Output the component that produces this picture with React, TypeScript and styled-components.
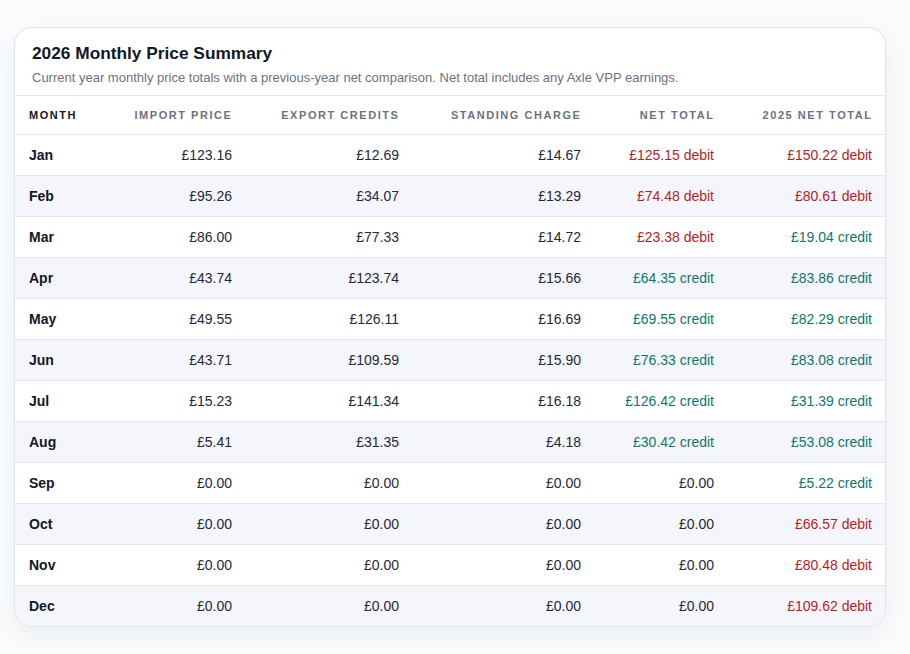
import styled, { createGlobalStyle } from "styled-components"

type Net = { amount: string; kind: "debit" | "credit" | "none" }

type Row = {
    month: string
    importPrice: string
    exportCredits: string
    standing: string
    net: Net
    prev: Net
}

const d = (amount: string): Net => ({ amount, kind: "debit" })
const c = (amount: string): Net => ({ amount, kind: "credit" })
const z: Net = { amount: "£0.00", kind: "none" }

const rows: Row[] = [
    { month: "Jan", importPrice: "£123.16", exportCredits: "£12.69", standing: "£14.67", net: d("£125.15"), prev: d("£150.22") },
    { month: "Feb", importPrice: "£95.26", exportCredits: "£34.07", standing: "£13.29", net: d("£74.48"), prev: d("£80.61") },
    { month: "Mar", importPrice: "£86.00", exportCredits: "£77.33", standing: "£14.72", net: d("£23.38"), prev: c("£19.04") },
    { month: "Apr", importPrice: "£43.74", exportCredits: "£123.74", standing: "£15.66", net: c("£64.35"), prev: c("£83.86") },
    { month: "May", importPrice: "£49.55", exportCredits: "£126.11", standing: "£16.69", net: c("£69.55"), prev: c("£82.29") },
    { month: "Jun", importPrice: "£43.71", exportCredits: "£109.59", standing: "£15.90", net: c("£76.33"), prev: c("£83.08") },
    { month: "Jul", importPrice: "£15.23", exportCredits: "£141.34", standing: "£16.18", net: c("£126.42"), prev: c("£31.39") },
    { month: "Aug", importPrice: "£5.41", exportCredits: "£31.35", standing: "£4.18", net: c("£30.42"), prev: c("£53.08") },
    { month: "Sep", importPrice: "£0.00", exportCredits: "£0.00", standing: "£0.00", net: z, prev: c("£5.22") },
    { month: "Oct", importPrice: "£0.00", exportCredits: "£0.00", standing: "£0.00", net: z, prev: d("£66.57") },
    { month: "Nov", importPrice: "£0.00", exportCredits: "£0.00", standing: "£0.00", net: z, prev: d("£80.48") },
    { month: "Dec", importPrice: "£0.00", exportCredits: "£0.00", standing: "£0.00", net: z, prev: d("£109.62") },
]

const label = (n: Net) => (n.kind === "none" ? n.amount : `${n.amount} ${n.kind}`)

// fixed column widths so the right edges line up with the design
const widths = [90, 142, 167, 182, 133, 158]

export default function App() {
    return (
        <>
            <GlobalStyle />
            <Page>
                <Card>
                    <Header>
                        <Title>2026 Monthly Price Summary</Title>
                        <Subtitle>
                            Current year monthly price totals with a previous-year net comparison. Net total
                            includes any Axle VPP earnings.
                        </Subtitle>
                    </Header>
                    <Table>
                        <colgroup>
                            {widths.map((w, i) => (
                                <col key={i} style={{ width: w }} />
                            ))}
                        </colgroup>
                        <thead>
                            <tr>
                                <Th $first>Month</Th>
                                <Th>Import price</Th>
                                <Th>Export credits</Th>
                                <Th>Standing charge</Th>
                                <Th>Net total</Th>
                                <Th>2025 net total</Th>
                            </tr>
                        </thead>
                        <tbody>
                            {rows.map((r) => (
                                <BodyRow key={r.month}>
                                    <MonthCell>{r.month}</MonthCell>
                                    <Td>{r.importPrice}</Td>
                                    <Td>{r.exportCredits}</Td>
                                    <Td>{r.standing}</Td>
                                    <Td $kind={r.net.kind}>{label(r.net)}</Td>
                                    <Td $kind={r.prev.kind}>{label(r.prev)}</Td>
                                </BodyRow>
                            ))}
                        </tbody>
                    </Table>
                </Card>
            </Page>
        </>
    )
}

const GlobalStyle = createGlobalStyle`
    body {
        margin: 0;
        background: #fafbfc;
        font-family: "Liberation Sans", Arial, sans-serif;
        color: #1f2937;
    }
`

const Page = styled.div`
    padding: 27px 24px 28px 14px;
`

const Card = styled.div`
    width: 872px;
    background: #ffffff;
    border: 1px solid #dce4f0;
    border-radius: 18px;
    box-shadow: 0 8px 24px rgba(15, 23, 42, 0.06);
    overflow: hidden;
    box-sizing: border-box;
`

const Header = styled.div`
    padding: 15px 18px 10px 17px;
    border-bottom: 1px solid #e3e8f0;
`

const Title = styled.h2`
    margin: 0 0 6px;
    font-size: 17.3px;
    font-weight: 700;
    color: #111827;
`

const Subtitle = styled.p`
    margin: 0;
    font-size: 13px;
    color: #6b7280;
`

const Table = styled.table`
    width: 100%;
    border-collapse: collapse;
    table-layout: fixed;
`

// letter-spacing leaves a trailing gap on right-aligned labels
const Th = styled.th<{ $first?: boolean }>`
    height: 38px;
    padding: 0 14.5px 0 14px;
    text-align: ${(p) => (p.$first ? "left" : "right")};
    font-size: 11px;
    font-weight: 700;
    letter-spacing: 1.55px;
    text-transform: uppercase;
    color: ${(p) => (p.$first ? "#111827" : "#6b7280")};
    border-bottom: 1px solid #e3e8f0;
`

const BodyRow = styled.tr`
    &:nth-child(even) {
        background: #f5f6fb;
    }
    & + & td {
        border-top: 1px solid #e3e8f0;
    }
`

const Td = styled.td<{ $kind?: "debit" | "credit" | "none" }>`
    height: 40px;
    padding: 0 15px 0 14px;
    text-align: right;
    font-size: 14px;
    white-space: nowrap;
    color: ${(p) =>
        p.$kind === "debit" ? "#b91c1c" : p.$kind === "credit" ? "#0f766e" : "#1f2937"};
`

const MonthCell = styled(Td)`
    text-align: left;
    font-weight: 700;
    color: #111827;
`
